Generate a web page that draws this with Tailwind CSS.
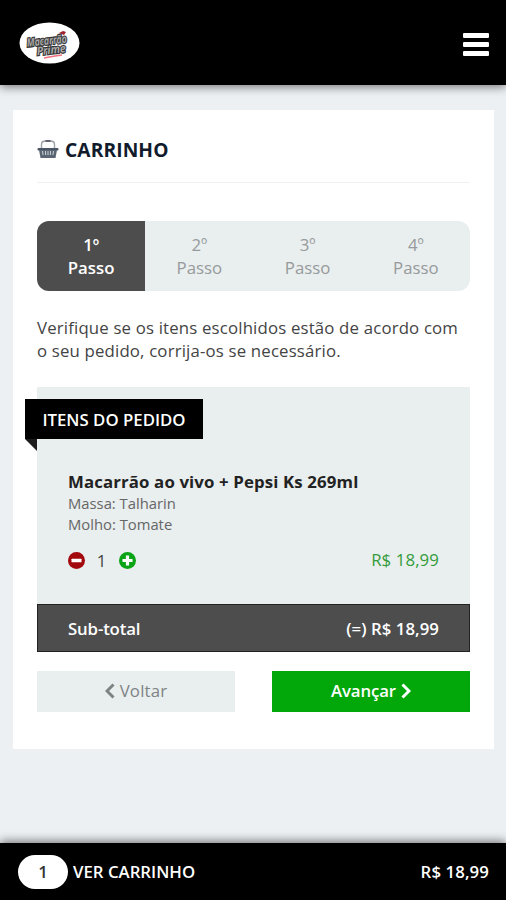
<!DOCTYPE html>
<html lang="pt-BR">
  <head>
    <meta charset="UTF-8" />
    <meta name="viewport" content="width=device-width, initial-scale=1.0" />
    <title>Carrinho</title>
    <script src="https://cdn.jsdelivr.net/npm/@tailwindcss/browser@4"></script>
  </head>
  <body
    class="h-[900px] flex flex-col overflow-hidden bg-[#ecf0f3] font-['Open_Sans',sans-serif] text-[16.8px] leading-[23px] text-[#444]"
  >
    <header
      class="h-[85px] shrink-0 bg-black pl-[19px] pr-[17px] flex items-center justify-between shadow-[0_2px_9px_rgba(0,0,0,0.5)]"
    >
      <svg class="w-[61px] h-[42px] overflow-visible" viewBox="0 0 61 42">
        <ellipse cx="30.5" cy="21" rx="30" ry="20.5" fill="#fff" />
        <g
          font-family="Open Sans, sans-serif"
          font-weight="700"
          font-style="italic"
          fill="#a8a8a8"
          stroke="#333"
          stroke-width="2.2"
          paint-order="stroke"
          transform="rotate(-6 30 21)"
        >
          <text x="8" y="22.500" font-size="11.5" textLength="40" lengthAdjust="spacingAndGlyphs">Macarrão</text>
          <text x="17" y="32" font-size="11.5" textLength="29" lengthAdjust="spacingAndGlyphs">Prime</text>
        </g>
        <path d="M40 11l4-2 3 1-2 3z" fill="#a3222f" />
        <path d="M25 36q10-2 18-3" fill="none" stroke="#f0707c" stroke-width="1.5" />
      </svg>
      <button class="flex flex-col gap-[4px] pt-[3px]">
        <span class="w-[26px] h-[5px] rounded-[1px] bg-white"></span>
        <span class="w-[26px] h-[5px] rounded-[1px] bg-white"></span>
        <span class="w-[26px] h-[5px] rounded-[1px] bg-white"></span>
      </button>
    </header>

    <main class="mt-[25px] ml-[13px] mr-[12px] h-[639px] shrink-0 bg-white px-[24px] flex flex-col">
      <h1
        class="h-[73px] shrink-0 pt-[6px] flex items-center gap-[6px] border-b border-[#f0f0f0] text-[19.2px] font-bold text-[#111b2b]"
      >
        <svg class="w-[22px] h-[20px]" viewBox="0 0 22 20">
          <path d="M4.500 9V5.500q0-3.500 4-3.500h5q4 0 4 3.500V9" fill="none" stroke="#9b9fa6" stroke-width="1.4" />
          <path d="M8.500 2h5" stroke="#5f6670" stroke-width="2" />
          <rect x="0.500" y="9" width="21" height="2.500" rx="1" fill="#4a5566" />
          <path d="M2 11h18l-1.500 8h-15z" fill="#5b6675" />
          <path d="M5.500 12l.6 4M8.500 12l.2 4M11 12v4M13.500 12l-.2 4M16.500 12l-.6 4" stroke="#cfd3d9" stroke-width="1" />
        </svg>
        <span class="tracking-[0.1px]">CARRINHO</span>
      </h1>

      <ol
        class="mt-[38px] h-[70px] shrink-0 grid grid-cols-4 overflow-hidden rounded-[12px] bg-[#e9eeee] text-center text-[#969a9c]"
      >
        <li class="pt-[12px] bg-[#4d4d4d] text-white font-semibold">1º<br />Passo</li>
        <li class="pt-[12px]">2º<br />Passo</li>
        <li class="pt-[12px]">3º<br />Passo</li>
        <li class="pt-[12px]">4º<br />Passo</li>
      </ol>

      <p class="mt-[25px] whitespace-nowrap tracking-[0.17px]">
        Verifique se os itens escolhidos estão de acordo com<br />o seu pedido, corrija-os se necessário.
      </p>

      <section class="mt-[25px] h-[217px] shrink-0 bg-[#e9eeee] pt-[12px]">
        <h2
          class="relative -ml-[12px] w-[178px] h-[40px] bg-black flex items-center justify-center text-white font-semibold whitespace-nowrap"
        >
          ITENS DO PEDIDO
          <svg class="absolute left-0 top-full w-[12px] h-[12px]" viewBox="0 0 12 12">
            <path d="M0 0h12v12z" fill="#1c1c1c" />
          </svg>
        </h2>
        <div class="mt-[31px] px-[31px]">
          <h3 class="font-bold text-[#222] whitespace-nowrap tracking-[0.14px]">Macarrão ao vivo + Pepsi Ks 269ml</h3>
          <p class="text-[14.8px] leading-[20.5px] text-[#666]">Massa: Talharin<br />Molho: Tomate</p>
          <div class="mt-[13px] flex items-center justify-between">
            <div class="flex items-center pt-[2px]">
              <svg class="w-[17px] h-[17px]" viewBox="0 0 17 17">
                <circle cx="8.500" cy="8.500" r="8.500" fill="#a30a0e" />
                <rect x="3.500" y="6.800" width="10" height="3.400" rx="0.500" fill="#fff" />
              </svg>
              <span class="w-[34px] pr-[1px] text-center">1</span>
              <svg class="w-[17px] h-[17px]" viewBox="0 0 17 17">
                <circle cx="8.500" cy="8.500" r="8.500" fill="#0ba416" />
                <path d="M3.500 8.500h10M8.500 3.500v10" stroke="#fff" stroke-width="3.200" />
              </svg>
            </div>
            <span class="text-[#339c3c] tracking-[0.1px]">R$ 18,99</span>
          </div>
        </div>
      </section>

      <div
        class="h-[48px] shrink-0 px-[30px] pt-[1px] flex items-center justify-between border border-[#222] bg-[#4d4d4d] text-white font-semibold"
      >
        <span class="tracking-[-0.15px]">Sub-total</span>
        <span class="tracking-[0.05px]">(=) R$ 18,99</span>
      </div>

      <div class="mt-[19px] flex justify-between">
        <button class="w-[198px] h-[41px] pb-[2px] bg-[#e9eeee] flex items-center justify-center gap-[5px] text-[#7e8385]">
          <svg class="w-[10px] h-[16px]" viewBox="0 0 10 16">
            <path d="M8.500 1.500L2 8l6.500 6.500" fill="none" stroke="currentColor" stroke-width="3" />
          </svg>
          <span class="tracking-[0.2px]">Voltar</span>
        </button>
        <button class="w-[198px] h-[41px] pb-[2px] bg-[#02a80a] flex items-center justify-center gap-[5px] text-white font-semibold">
          <span class="tracking-[-0.1px]">Avançar</span>
          <svg class="w-[10px] h-[16px]" viewBox="0 0 10 16">
            <path d="M1.500 1.500L8 8l-6.500 6.500" fill="none" stroke="currentColor" stroke-width="3" />
          </svg>
        </button>
      </div>
    </main>

    <footer
      class="mt-auto h-[57px] shrink-0 bg-black pl-[18px] pr-[17px] flex items-center text-white font-semibold shadow-[0_-2px_9px_rgba(0,0,0,0.5)]"
    >
      <span class="w-[50px] h-[34px] rounded-full bg-white flex items-center justify-center text-[#333]">1</span>
      <span class="ml-[5px]">VER CARRINHO</span>
      <span class="ml-auto tracking-[0.1px]">R$ 18,99</span>
    </footer>
  </body>
</html>
